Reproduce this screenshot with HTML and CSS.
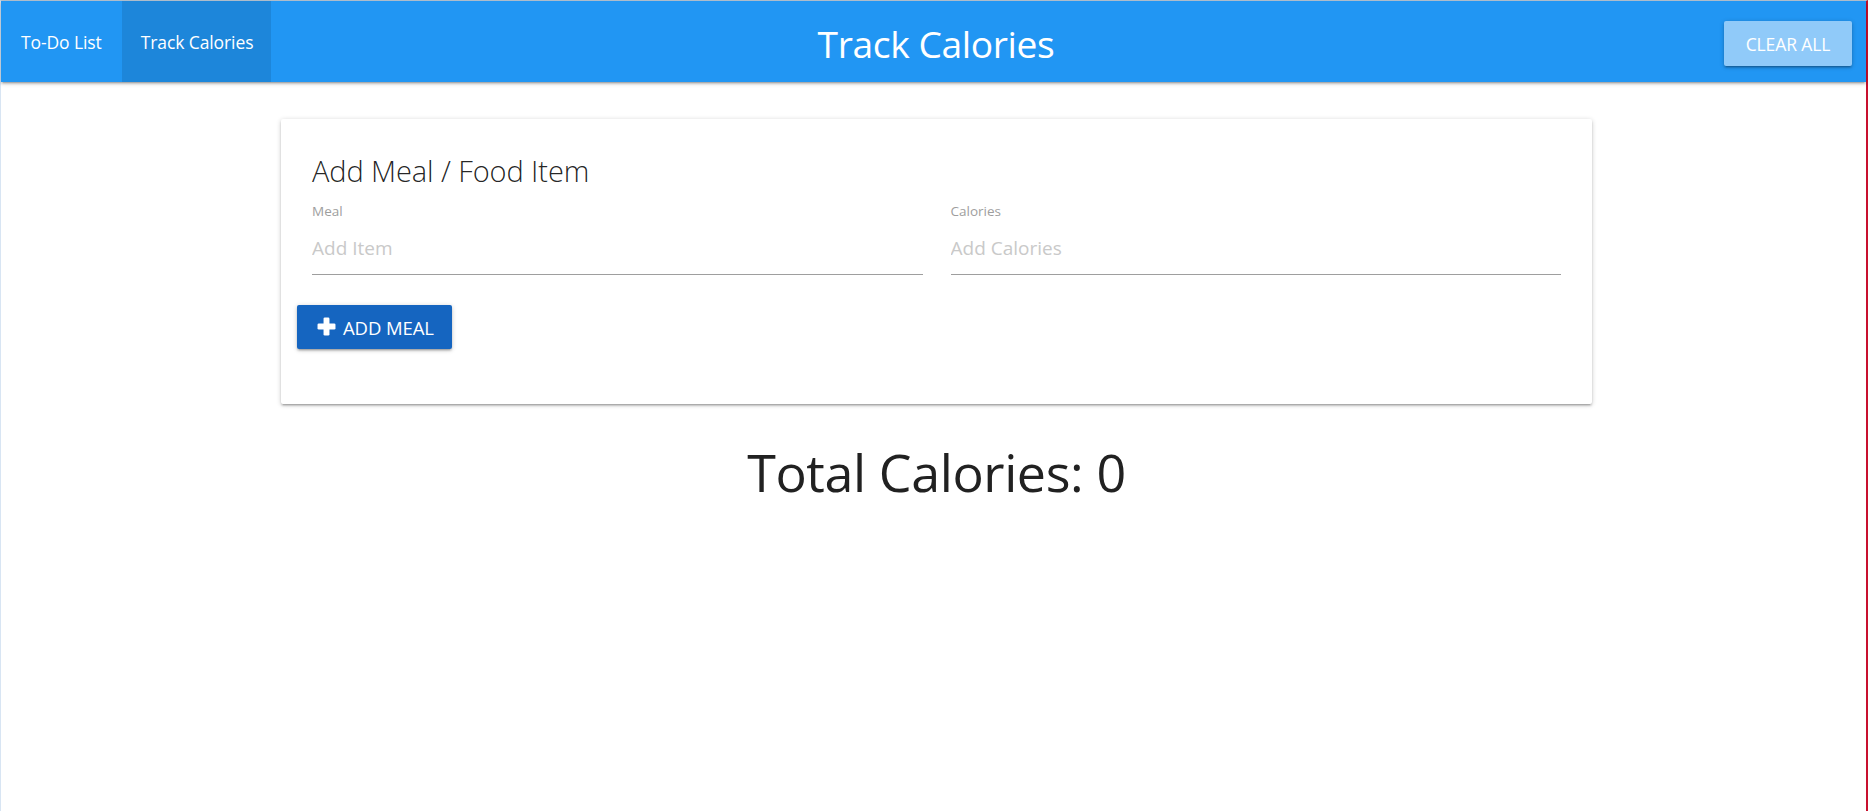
FILE: index.html
```html
<!DOCTYPE html>
<html lang="en">
<head>
<meta charset="utf-8">
<title>Track Calories</title>
<link rel="stylesheet" href="styles.css">
</head>
<body>
<div class="frame">
  <nav class="navbar">
    <ul class="nav-links">
      <li><a href="#" class="nav-link">To-Do List</a></li>
      <li><a href="#" class="nav-link active">Track Calories</a></li>
    </ul>
    <div class="brand">Track Calories</div>
    <div class="nav-right">
      <button class="btn btn-clear">CLEAR ALL</button>
    </div>
  </nav>

  <main class="main">
    <section class="card">
      <h2 class="card-title">Add Meal / Food Item</h2>
      <form class="meal-form">
        <div class="fields">
          <div class="field">
            <label class="field-label" for="item-name">Meal</label>
            <input class="field-input" id="item-name" type="text" placeholder="Add Item">
          </div>
          <div class="field">
            <label class="field-label" for="item-calories">Calories</label>
            <input class="field-input" id="item-calories" type="text" placeholder="Add Calories">
          </div>
        </div>
        <button type="button" class="btn btn-add">
          <svg class="plus-icon" viewBox="0 0 18 18" aria-hidden="true">
            <rect x="6.2" y="0.5" width="5.6" height="17" rx="1.2" fill="#fff"/>
            <rect x="0.5" y="6.2" width="17" height="5.6" rx="1.2" fill="#fff"/>
          </svg>
          <span>ADD MEAL</span>
        </button>
      </form>
    </section>

    <h3 class="total">Total Calories: <span class="total-value">0</span></h3>
  </main>
</div>
</body>
</html>
```

FILE: styles.css
```css
* { box-sizing: border-box; }

html, body {
  margin: 0;
  padding: 0;
  background: #ffffff;
}

body {
  font-family: "Open Sans", "Noto Sans", "Liberation Sans", sans-serif;
  color: rgba(0, 0, 0, 0.87);
}

.frame {
  min-height: 100vh;
  border-top: 1px solid #b9c7d6;
  border-left: 1px solid #d8e5f3;
  border-right: 2px solid #c8102e;
}

/* NAV */
.navbar {
  height: 81px;
  background: #2196f3;
  display: grid;
  grid-template-columns: 1fr auto 1fr;
  align-items: stretch;
  box-shadow: 0 2px 2px 0 rgba(0,0,0,0.14), 0 3px 1px -2px rgba(0,0,0,0.12), 0 1px 5px 0 rgba(0,0,0,0.2);
  position: relative;
  z-index: 1;
}

.nav-links {
  list-style: none;
  margin: 0;
  padding: 0;
  display: flex;
  align-items: stretch;
}

.nav-links li { display: flex; }

.nav-link {
  display: flex;
  align-items: center;
  padding: 1px 20px 0 20px;
  color: #ffffff;
  text-decoration: none;
  font-size: 17.5px;
  letter-spacing: -0.1px;
}

.nav-link.active {
  background: rgba(0, 0, 0, 0.1);
  padding: 1px 18px 0 19px;
}

.brand {
  display: flex;
  align-items: center;
  color: #ffffff;
  font-size: 37.2px;
  letter-spacing: -0.4px;
  padding-top: 3px;
  padding-left: 5px;
}

.nav-right {
  display: flex;
  align-items: center;
  justify-content: flex-end;
  padding-right: 14px;
  padding-top: 4px;
}

.btn {
  border: none;
  border-radius: 2px;
  color: #ffffff;
  font-family: inherit;
  font-size: 17.5px;
  letter-spacing: -0.1px;
  cursor: pointer;
  box-shadow: 0 2px 2px 0 rgba(0,0,0,0.14), 0 3px 1px -2px rgba(0,0,0,0.12), 0 1px 5px 0 rgba(0,0,0,0.2);
}

.btn-clear {
  width: 128px;
  height: 45px;
  background: #90caf9;
  padding: 0;
}

/* MAIN */
.main {
  padding-left: 6px;
}

.card {
  width: 1311px;
  margin: 37px auto 0;
  background: #ffffff;
  border-radius: 2px;
  padding: 31px 31px 55px 31px;
  box-shadow: 0 2px 2px 0 rgba(0,0,0,0.14), 0 3px 1px -2px rgba(0,0,0,0.12), 0 1px 5px 0 rgba(0,0,0,0.2);
}

.card-title {
  margin: 0;
  font-size: 29px;
  font-weight: 300;
  line-height: 42px;
  color: rgba(0, 0, 0, 0.87);
  letter-spacing: -0.1px;
}

.meal-form {
  margin: 10px 0 0;
}

.fields {
  display: grid;
  grid-template-columns: 1fr 1fr;
  column-gap: 28px;
}

.field {
  display: flex;
  flex-direction: column;
}

.field-label {
  font-size: 13.5px;
  line-height: 18px;
  color: #9e9e9e;
}

.field-input {
  height: 55px;
  border: none;
  border-bottom: 1px solid #9e9e9e;
  outline: none;
  padding: 2px 0 0;
  font-family: inherit;
  font-size: 19px;
  color: rgba(0, 0, 0, 0.87);
  background: transparent;
}

.field-input::placeholder {
  color: #c9c9c9;
}

.btn-add {
  margin: 30px 0 0 -15px;
  height: 44px;
  width: 155px;
  background: #1565c0;
  display: flex;
  align-items: center;
  gap: 7px;
  padding: 0 0 0 20px;
  font-size: 18.5px;
}

.plus-icon {
  width: 19px;
  height: 19px;
  flex: none;
  margin-top: -2px;
}

.total {
  margin: 33px 0 0;
  text-align: center;
  font-size: 52px;
  font-weight: 400;
  line-height: 70px;
  color: #212121;
  letter-spacing: -0.4px;
}
```
